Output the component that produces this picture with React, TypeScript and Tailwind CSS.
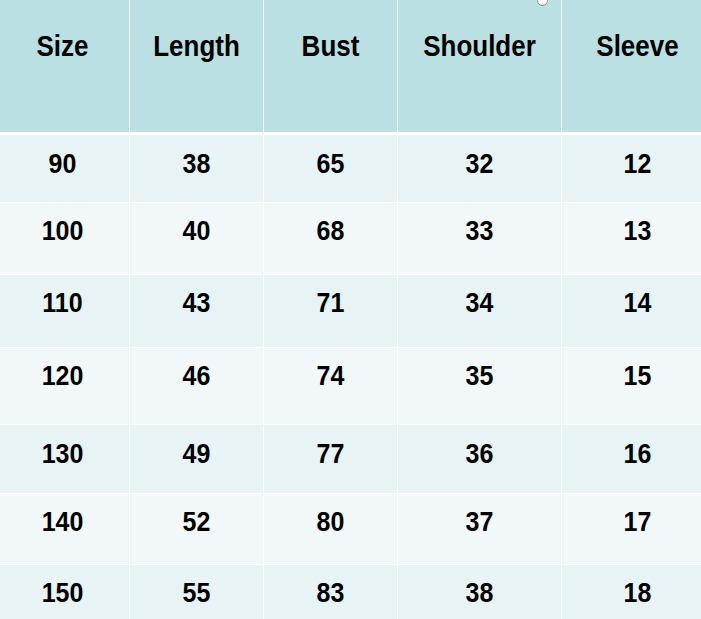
const headers = ['Size', 'Length', 'Bust', 'Shoulder', 'Sleeve']

const rows = [
  { h: 'h-[67px]', bg: 'bg-[#e7f3f4]', cells: ['90', '38', '65', '32', '12'] },
  { h: 'h-[71px]', bg: 'bg-[#f2f8fa]', cells: ['100', '40', '68', '33', '13'] },
  { h: 'h-[72px]', bg: 'bg-[#e7f3f4]', cells: ['110', '43', '71', '34', '14'] },
  { h: 'h-[76px]', bg: 'bg-[#f2f8fa]', cells: ['120', '46', '74', '35', '15'] },
  { h: 'h-[68px]', bg: 'bg-[#e7f3f4]', cells: ['130', '49', '77', '36', '16'] },
  { h: 'h-[70px]', bg: 'bg-[#f2f8fa]', cells: ['140', '52', '80', '37', '17'] },
  { h: 'h-[70px]', bg: 'bg-[#e7f3f4]', cells: ['150', '55', '83', '38', '18'] },
]

const cols = 'grid grid-cols-[133px_133px_133px_163px_151px] gap-x-px'

export default function App() {
  return (
    <div className="relative w-[701px] h-[619px] overflow-hidden bg-white font-['Liberation_Sans',Arial,sans-serif] text-black">
      <div className="-ml-[4px] w-[721px] flex flex-col">
        {/* header */}
        <div className={`${cols} bg-white`}>
          {headers.map((h) => (
            <div key={h} className="h-[132px] bg-[#bae0e3] flex justify-center pt-[35px]">
              <span className="inline-block text-[26px] leading-[30px] font-bold scale-y-[1.12]">{h}</span>
            </div>
          ))}
        </div>
        <div className="h-[3px] bg-white" />
        {/* body */}
        <div className="flex flex-col gap-y-px bg-white">
          {rows.map((r, i) => (
            <div key={i} className={`${cols} bg-white`}>
              {r.cells.map((c, j) => (
                <div key={j} className={`${r.h} ${r.bg} flex justify-center pt-[15px]`}>
                  <span className="inline-block text-[25px] leading-[28px] font-bold scale-y-[1.12]">{c}</span>
                </div>
              ))}
            </div>
          ))}
        </div>
      </div>
      {/* resize handle peeking at top edge */}
      <div className="absolute left-[537px] -top-[5px] w-[11px] h-[11px] rounded-full bg-white border border-[#8a8a8a]" />
    </div>
  )
}
